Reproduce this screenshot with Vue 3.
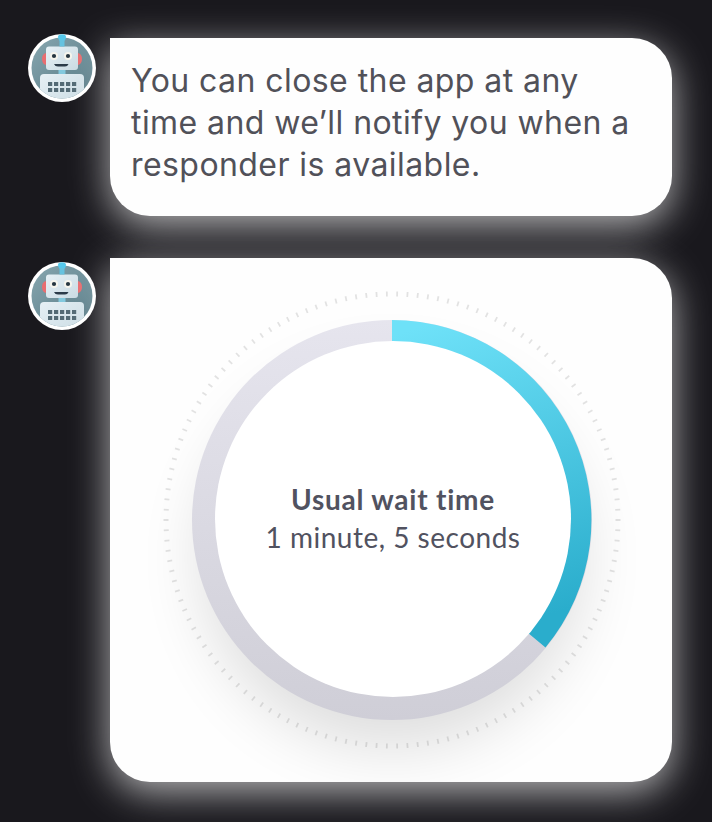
<script setup>
const cards = ['message', 'wait']
const keys = Array.from({ length: 10 }, (_, i) => ({
  x: 20 + (i % 5) * 6,
  y: 48 + Math.floor(i / 5) * 6,
}))
const ticks = Array.from({ length: 138 }, (_, i) => (i + 0.5) * (360 / 138))
</script>

<template>
  <main class="chat">
    <section v-for="card in cards" :key="card" class="row">
      <div class="avatar">
        <svg viewBox="0 0 68 68" aria-hidden="true">
          <defs>
            <linearGradient :id="'sky-' + card" x1="0" y1="0" x2="1" y2="1">
              <stop offset="0" stop-color="#8aa9b2" />
              <stop offset="1" stop-color="#537782" />
            </linearGradient>
            <linearGradient :id="'metal-' + card" x1="0" y1="0" x2="1" y2="1">
              <stop offset="0" stop-color="#e6f0f5" />
              <stop offset="1" stop-color="#cadbe3" />
            </linearGradient>
            <clipPath :id="'face-' + card"><circle cx="34" cy="34" r="30.5" /></clipPath>
          </defs>
          <circle cx="34" cy="34" r="34" fill="#fff" />
          <g :clip-path="`url(#face-${card})`">
            <rect width="68" height="68" :fill="`url(#sky-${card})`" />
            <path d="M18 19V31Q14 30 14 25T18 19ZM50 19V31Q54 30 54 25T50 19Z" fill="#e96d70" />
            <rect x="30.5" y="34" width="7" height="7" fill="#83c9de" />
            <rect x="18" y="12.5" width="32" height="23.5" rx="3" :fill="`url(#metal-${card})`" />
            <rect x="12" y="40" width="44" height="32" rx="4" :fill="`url(#metal-${card})`" />
            <circle cx="26" cy="22" r="4" fill="#f6f5ed" />
            <circle cx="40" cy="22" r="4" fill="#f6f5ed" />
            <circle cx="26" cy="22" r="2.1" fill="#263640" />
            <circle cx="40" cy="22" r="2.1" fill="#263640" />
            <path d="M26 30H40.5Q39.5 32.5 37 32.5H30Q27 32.5 26 30Z" fill="#2b3b49" />
            <rect v-for="(k, i) in keys" :key="i" :x="k.x" :y="k.y" width="4.2" height="4" fill="#536a75" />
          </g>
          <path d="M30 3Q30 0.2 34 0.2T38 3Q38 6 34 8.5Q30 6 30 3Z" fill="#55c8eb" />
          <rect x="31.5" y="6" width="5" height="6.5" fill="#65c2df" />
        </svg>
      </div>

      <p v-if="card === 'message'" class="bubble message">
        You can close the app at any<br />time and we’ll notify you when a<br />responder is available.
      </p>

      <div v-else class="bubble wait">
        <svg class="dial" viewBox="0 0 562 524" aria-hidden="true">
          <defs>
            <linearGradient id="track" x1="0" y1="0" x2="0" y2="1">
              <stop offset="0" stop-color="#e6e5ee" />
              <stop offset="1" stop-color="#cfced7" />
            </linearGradient>
            <linearGradient id="progress" gradientUnits="userSpaceOnUse" x1="330" y1="62" x2="430" y2="360">
              <stop offset="0" stop-color="#6ee1f8" />
              <stop offset="1" stop-color="#2aadcc" />
            </linearGradient>
            <filter id="soft" x="-40%" y="-40%" width="180%" height="180%">
              <feGaussianBlur stdDeviation="32" />
            </filter>
          </defs>
          <circle cx="282" cy="300" r="190" fill="#000" opacity=".13" filter="url(#soft)" />
          <g stroke="#000" stroke-opacity=".11" stroke-width="1.8">
            <line
              v-for="a in ticks"
              :key="a"
              x1="282"
              y1="33.5"
              x2="282"
              y2="38.5"
              :transform="`rotate(${a} 282 262)`"
            />
          </g>
          <circle cx="282" cy="262" r="200" fill="url(#track)" />
          <path d="M282 62A200 200 0 0 1 435.5 389.5L282 262Z" fill="url(#progress)" />
          <circle cx="283" cy="261" r="178" fill="#fff" />
        </svg>
        <div class="caption">
          <strong>Usual wait time</strong>
          <span>1 minute, 5 seconds</span>
        </div>
      </div>
    </section>
  </main>
</template>

<style>
body {
  margin: 0;
  background: #19181d;
}
</style>

<style scoped>
.chat {
  box-sizing: border-box;
  height: 822px;
  padding: 38px 40px 40px 28px;
  display: flex;
  flex-direction: column;
  gap: 42px;
  overflow: hidden;
}
.row {
  display: flex;
  gap: 14px;
  align-items: flex-start;
}
.avatar {
  flex: none;
  width: 68px;
  height: 68px;
  margin-top: -4px;
}
.row + .row .avatar {
  margin-top: 4px;
}
.avatar svg,
.dial {
  display: block;
  width: 100%;
  height: 100%;
}
.bubble {
  box-sizing: border-box;
  width: 562px;
  margin: 0;
  background: #fefefe;
  border-radius: 0 40px 40px 40px;
  box-shadow: 0 10px 38px rgba(255, 255, 255, 0.68);
}
.message {
  height: 178px;
  padding: 22px 20px 22px 21px;
  font: 380 32px/42px Inter, sans-serif;
  letter-spacing: 0.43px;
  white-space: nowrap;
  color: #515159;
}
.wait {
  display: grid;
  height: 524px;
}
.wait > * {
  grid-area: 1 / 1;
}
.dial {
  border-radius: inherit;
}
.caption {
  align-self: center;
  padding: 0 0 4px 4px;
  display: flex;
  flex-direction: column;
  align-items: center;
  font: 400 28px/38px Lato, sans-serif;
  letter-spacing: 0.5px;
  color: #515260;
}
.caption strong {
  font-weight: 700;
  letter-spacing: 0.77px;
}
</style>
